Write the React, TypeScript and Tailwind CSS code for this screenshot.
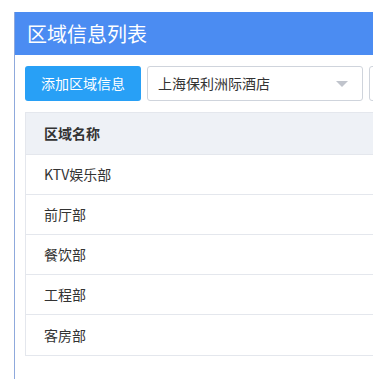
import React from "react";

const rows = ["KTV娱乐部", "前厅部", "餐饮部", "工程部", "客房部"];

export default function App() {
  return (
    <div
      className="w-[373px] h-[379px] overflow-hidden bg-white pt-[12px] pl-[14px]"
      style={{ fontFamily: '"Noto Sans CJK SC", "Noto Sans", sans-serif' }}
    >
      <div className="w-[480px] h-[400px] border-l border-[#8fa9dc] bg-white">
        <div className="h-[43px] bg-[#4b8cf2] flex items-center pl-[12px] text-white text-[20px] leading-none">
          区域信息列表
        </div>
        <div className="pl-[10px] pt-[11px]">
          <div className="flex items-center gap-[6px]">
            <div className="w-[116px] h-[35px] rounded-[3px] bg-[#28a0f6] text-white text-[14px] flex items-center justify-center">
              添加区域信息
            </div>
            <div className="w-[216px] h-[35px] rounded-[3px] border border-[#cfd4dc] bg-white flex items-center justify-between pl-[10px] pr-[14px] text-[14px] text-[#333]">
              <span>上海保利洲际酒店</span>
              <span className="w-0 h-0 border-l-[6px] border-r-[6px] border-t-[6px] border-l-transparent border-r-transparent border-t-[#c0c4cc]" />
            </div>
            <div className="w-[60px] h-[35px] rounded-[3px] border border-[#cfd4dc] bg-white" />
          </div>
          <div className="mt-[11px] w-[460px] border border-[#e4e7ed]">
            <div className="h-[42px] bg-[#eef1f6] flex items-center pl-[18px] text-[14px] font-bold text-[#333] border-b border-[#e4e7ed]">
              区域名称
            </div>
            {rows.map((r, i) => (
              <div
                key={r}
                className={`h-[40px] flex items-center pl-[18px] text-[14px] text-[#333] ${
                  i < rows.length - 1 ? "border-b border-[#e4e7ed]" : ""
                }`}
              >
                {r}
              </div>
            ))}
          </div>
        </div>
      </div>
    </div>
  );
}
